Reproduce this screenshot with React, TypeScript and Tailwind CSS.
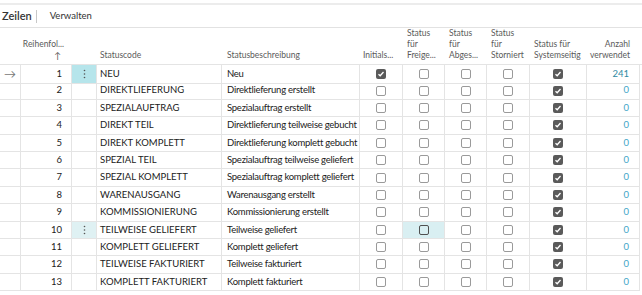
import React from 'react';

type Row = {
  nr: number;
  code: string;
  desc: string;
  initial: boolean;
  count: string;
};

const rows: Row[] = [
  { nr: 1, code: 'NEU', desc: 'Neu', initial: true, count: '241' },
  { nr: 2, code: 'DIREKTLIEFERUNG', desc: 'Direktlieferung erstellt', initial: false, count: '0' },
  { nr: 3, code: 'SPEZIALAUFTRAG', desc: 'Spezialauftrag erstellt', initial: false, count: '0' },
  { nr: 4, code: 'DIREKT TEIL', desc: 'Direktlieferung teilweise gebucht', initial: false, count: '0' },
  { nr: 5, code: 'DIREKT KOMPLETT', desc: 'Direktlieferung komplett gebucht', initial: false, count: '0' },
  { nr: 6, code: 'SPEZIAL TEIL', desc: 'Spezialauftrag teilweise geliefert', initial: false, count: '0' },
  { nr: 7, code: 'SPEZIAL KOMPLETT', desc: 'Spezialauftrag komplett geliefert', initial: false, count: '0' },
  { nr: 8, code: 'WARENAUSGANG', desc: 'Warenausgang erstellt', initial: false, count: '0' },
  { nr: 9, code: 'KOMMISSIONIERUNG', desc: 'Kommissionierung erstellt', initial: false, count: '0' },
  { nr: 10, code: 'TEILWEISE GELIEFERT', desc: 'Teilweise geliefert', initial: false, count: '0' },
  { nr: 11, code: 'KOMPLETT GELIEFERT', desc: 'Komplett geliefert', initial: false, count: '0' },
  { nr: 12, code: 'TEILWEISE FAKTURIERT', desc: 'Teilweise fakturiert', initial: false, count: '0' },
  { nr: 13, code: 'KOMPLETT FAKTURIERT', desc: 'Komplett fakturiert', initial: false, count: '0' },
];

const cols = 'grid grid-cols-[21px_51px_25px_125px_138px_43px_42px_42px_43px_57px_53px]';

function Box({ checked, focus }: { checked?: boolean; focus?: boolean }) {
  if (checked) {
    return (
      <span className="flex h-[10px] w-[10px] items-center justify-center rounded-[2px] bg-[#5a5a5a]">
        <svg width="8" height="8" viewBox="0 0 8 8">
          <path d="M1.5 4.2 L3.2 5.8 L6.5 2" fill="none" stroke="white" strokeWidth="1.3" />
        </svg>
      </span>
    );
  }
  return (
    <span
      className={
        'block h-[10px] w-[10px] rounded-[2px] border ' +
        (focus ? 'border-[#505050]' : 'border-[#9a9a9a]')
      }
    />
  );
}

function Cell({ children, className = '' }: { children?: React.ReactNode; className?: string }) {
  return (
    <div className={'flex items-center border-r border-b border-[#e4e4e4] ' + className}>{children}</div>
  );
}

export default function App() {
  return (
    <div className="h-[295px] w-[642px] overflow-hidden bg-white font-['Lato',sans-serif] text-[#212121]">
      <div className="mt-[3px] h-[2px] bg-[#ececec]" />
      <div className="flex h-[23px] items-center border-b border-[#e2e2e2]">
        <span className="ml-[2px] text-[11px] font-semibold text-[#333]">Zeilen</span>
        <span className="ml-[4px] h-[13px] w-px bg-[#c8c8c8]" />
        <span className="ml-[13px] text-[9.5px] text-[#333]">Verwalten</span>
      </div>

      <div className={cols + ' h-[37px] border-b border-[#e4e4e4] text-[8.5px] leading-[11px] text-[#5a5a5a]'}>
        <div />
        <div className="flex flex-col items-end justify-end pb-[3px] pr-[8px]">
          <span>Reihenfol...</span>
          <span className="mr-[3px] text-[9px]">↑</span>
        </div>
        <div />
        <div className="flex items-end pb-[3px] pl-[3px]">Statuscode</div>
        <div className="flex items-end pb-[3px] pl-[5px]">Statusbeschreibung</div>
        <div className="flex items-end pb-[3px] pl-[3px]">Initials...</div>
        <div className="flex flex-col justify-end pb-[3px] pl-[4px]">
          <span>Status</span>
          <span>für</span>
          <span>Freige...</span>
        </div>
        <div className="flex flex-col justify-end pb-[3px] pl-[4px]">
          <span>Status</span>
          <span>für</span>
          <span>Abges...</span>
        </div>
        <div className="flex flex-col justify-end pb-[3px] pl-[4px]">
          <span>Status</span>
          <span>für</span>
          <span>Storniert</span>
        </div>
        <div className="flex flex-col justify-end pb-[3px] pl-[4px]">
          <span>Status für</span>
          <span>Systemseitig</span>
        </div>
        <div className="flex flex-col items-end justify-end pb-[3px] pr-[10px]">
          <span>Anzahl</span>
          <span>verwendet</span>
        </div>
      </div>

      {rows.map((r) => {
        const first = r.nr === 1;
        const focusRow = r.nr === 10;
        return (
          <div key={r.nr} className={cols + ' h-[17.4px] text-[9.5px]'}>
            <Cell className="justify-center text-[12px] text-[#777]">{first ? '→' : ''}</Cell>
            <Cell className="justify-end pr-[9px]">{r.nr}</Cell>
            <Cell
              className={
                'justify-center text-[#666] ' +
                (first ? 'bg-[#b6e5eb]' : focusRow ? 'bg-[#dff1f3]' : '')
              }
            >
              {first || focusRow ? (
                <svg width="3" height="10" viewBox="0 0 3 10">
                  <circle cx="1.5" cy="1.5" r="0.8" fill="#555" />
                  <circle cx="1.5" cy="5" r="0.8" fill="#555" />
                  <circle cx="1.5" cy="8.5" r="0.8" fill="#555" />
                </svg>
              ) : null}
            </Cell>
            <Cell className="pl-[3px] whitespace-nowrap">{r.code}</Cell>
            <Cell className="pl-[5px] whitespace-nowrap tracking-[-0.25px]">{r.desc}</Cell>
            <Cell className="justify-center">
              <Box checked={r.initial} />
            </Cell>
            <Cell className={'justify-center ' + (focusRow ? 'bg-[#d9eff2]' : '')}>
              <Box focus={focusRow} />
            </Cell>
            <Cell className="justify-center">
              <Box />
            </Cell>
            <Cell className="justify-center">
              <Box />
            </Cell>
            <Cell className="justify-center">
              <Box checked />
            </Cell>
            <Cell className={'justify-end pr-[10px] ' + (first ? 'text-[#2f8aa3]' : 'text-[#3fa6c8]')}>
              {r.count}
            </Cell>
          </div>
        );
      })}
    </div>
  );
}
